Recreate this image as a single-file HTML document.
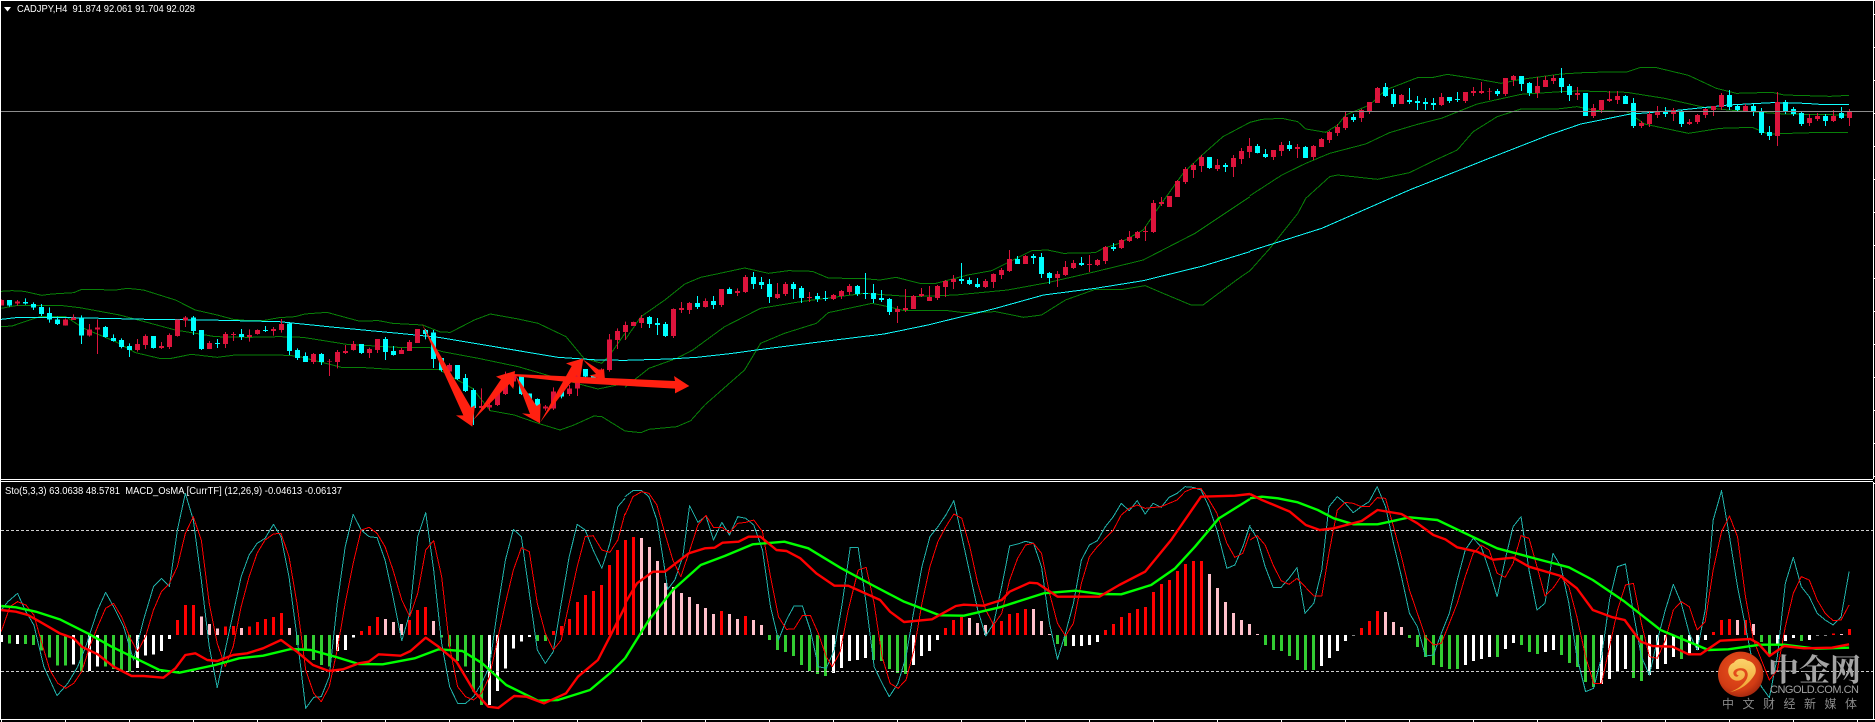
<!DOCTYPE html>
<html lang="zh"><head><meta charset="utf-8"><title>CADJPY,H4</title>
<style>
html,body{margin:0;padding:0;background:#000;width:1875px;height:722px;overflow:hidden}
svg{display:block}
polyline{fill:none;vector-effect:non-scaling-stroke;stroke-linejoin:round}
.bb polyline{stroke:#087f08;stroke-width:1}
.ma polyline{stroke:#1ff;stroke-width:1}
.st polyline{stroke:#20b2aa;stroke-width:1}
.sg polyline{stroke:#f00;stroke-width:1}
.mr polyline{stroke:#f00;stroke-width:2.4;shape-rendering:auto}
.mg polyline{stroke:#0f0;stroke-width:2.4;shape-rendering:auto}
text{font-family:"Liberation Sans","Noto Sans CJK SC",sans-serif;fill:#fff}
</style></head><body>
<svg width="1875" height="722" viewBox="0 0 1875 722" xmlns="http://www.w3.org/2000/svg">
<rect width="1875" height="722" fill="#000"/>

<!-- main chart lines: Bollinger + MA -->
<g shape-rendering="crispEdges">
<g class="bb">
<g transform="scale(.3986,.33333)">
<polyline points="3,874 30,872 60,874 105,886 130,882 185,878 205,868 250,869 290,870 320,865 360,870 400,885 440,900 490,930 545,945 585,958 625,962 660,962 700,953 740,950 765,942 820,937 860,950 900,963 950,962 985,970 1060,975 1105,996 1130,997 1190,960 1230,942 1300,957 1350,970 1420,1010 1465,1075 1510,1090 1530,1065 1568,1000"/>
<polyline points="3,925 40,917 150,916 200,923 300,945 440,990 540,1010 625,1012 700,1010 760,1012 870,1033 1000,1042 1075,1042 1110,1055 1200,1075 1300,1100 1400,1135 1500,1167 1568,1150"/>
<polyline points="3,980 30,978 100,950 165,950 210,985 290,1025 340,1058 400,1075 430,1075 480,1063 545,1072 590,1065 700,1065 745,1068 860,1103 915,1103 980,1108 1100,1108 1185,1165 1230,1232 1290,1245 1350,1270 1405,1290 1440,1275 1490,1248 1510,1250 1568,1293"/>
</g>
<g transform="translate(625,0) scale(.3986,.33333)">
<polyline points="0,1020 40,950 100,900 150,852 190,832 230,822 300,804 360,820 410,812 470,814 510,834 600,836 640,840 680,832 740,850 780,850 860,825 920,812 1020,752 1060,750 1100,760 1180,758 1200,745 1240,730 1300,690 1340,620 1400,520 1445,468 1500,410 1568,367"/>
<polyline points="0,1162 60,1105 130,1075 170,1050 250,980 340,925 440,905 600,880 720,890 830,885 960,870 1060,848 1180,815 1300,780 1430,700 1568,590"/>
<polyline points="0,1293 40,1298 60,1288 130,1280 165,1262 200,1215 300,1110 340,1030 400,1000 480,970 510,938 620,910 660,920 700,932 810,932 850,938 930,935 1000,952 1045,945 1105,900 1180,868 1250,868 1305,857 1350,880 1420,915 1450,915 1540,835 1568,812"/>
</g>
<g transform="translate(1250,0) scale(.3986,.33333)">
<polyline points="0,367 30,358 80,355 120,365 140,387 190,397 220,375 240,345 300,315 340,270 420,233 460,232 495,223 560,235 630,250 680,238 780,222 850,217 945,216 980,202 1020,203 1100,226 1170,265 1220,280 1310,277 1340,285 1455,289 1503,286"/>
<polyline points="0,587 80,525 140,490 200,460 290,432 350,398 420,373 480,355 570,312 680,283 780,275 830,273 945,277 1040,295 1140,322 1200,330 1340,342 1500,345"/>
<polyline points="0,812 50,745 120,640 140,595 200,530 220,525 320,538 400,518 460,483 520,450 560,395 620,350 680,327 770,327 820,320 870,332 945,335 990,372 1040,385 1100,400 1180,385 1260,382 1300,402 1410,398 1500,398"/>
</g>
</g>
<g class="ma">
<g transform="scale(.3986,.33333)"><polyline points="3,958 40,953 180,953 370,958 520,960 700,965 840,982 1000,1000 1100,1012 1200,1032 1300,1052 1400,1072 1500,1080 1568,1081"/></g>
<g transform="translate(625,0) scale(.3986,.33333)"><polyline points="0,1081 110,1077 180,1072 270,1060 330,1050 500,1024 650,1002 760,975 930,925 1050,885 1180,865 1300,842 1450,798 1568,755"/></g>
<g transform="translate(1250,0) scale(.3986,.33333)"><polyline points="0,753 180,685 400,570 600,475 750,405 830,372 950,343 1080,330 1200,315 1310,308 1395,310 1440,314 1503,314"/></g>
</g>

<!-- candles -->
<g transform="scale(1,.33333)" fill="none">
<path stroke="#dc143c" stroke-width="1" d="M1.5 898V916M17.5 900V917M65.5 955V977M73.5 943V960M89.5 972V1010M97.5 958V1062M137.5 1017V1055M145.5 1003V1047M161.5 1026V1047M169.5 1000V1047M177.5 958V1010M185.5 948V981M209.5 1023V1047M225.5 996V1044M233.5 996V1023M249.5 988V1025M257.5 988V1004M273.5 981V1007M281.5 957V998M313.5 1059V1092M329.5 1077V1128M337.5 1050V1105M345.5 1035V1062M353.5 1023V1052M369.5 1043V1074M377.5 1017V1059M401.5 1044V1062M409.5 1020V1053M417.5 987V1029M449.5 1090V1120M481.5 1165V1230M489.5 1205V1232M497.5 1155V1218M505.5 1115V1185M513.5 1125V1160M545.5 1215V1232M553.5 1162V1230M569.5 1155V1188M577.5 1120V1188M601.5 1105V1132M609.5 1002V1115M617.5 985V1047M625.5 965V1020M633.5 965V978M641.5 945V984M673.5 925V1014M681.5 906V939M689.5 906V942M705.5 895V923M721.5 867V921M737.5 865V888M745.5 825V879M777.5 849V897M785.5 846V888M809.5 876V906M833.5 882V900M841.5 870V897M849.5 852V885M897.5 918V969M905.5 867V936M913.5 885V927M921.5 864V891M929.5 858V903M937.5 855V900M945.5 840V891M953.5 825V867M985.5 837V864M993.5 820V864M1001.5 804V837M1009.5 750V816M1025.5 765V792M1057.5 813V861M1065.5 783V828M1073.5 780V807M1089.5 765V816M1097.5 777V798M1105.5 738V792M1121.5 717V747M1129.5 693V726M1137.5 693V717M1145.5 678V723M1153.5 600V699M1161.5 591V618M1169.5 588V621M1177.5 540V591M1185.5 501V552M1193.5 489V534M1201.5 465V516M1217.5 477V513M1233.5 465V531M1241.5 444V492M1249.5 414V474M1273.5 450V480M1281.5 426V468M1297.5 432V474M1313.5 435V480M1321.5 414V441M1329.5 393V429M1337.5 372V408M1345.5 336V390M1361.5 327V366M1369.5 306V342M1377.5 261V309M1401.5 282V312M1441.5 279V318M1465.5 276V309M1473.5 261V288M1481.5 246V282M1489.5 264V300M1505.5 234V288M1513.5 225V258M1537.5 231V294M1545.5 228V261M1553.5 225V252M1577.5 261V300M1593.5 312V354M1601.5 300V339M1609.5 273V306M1617.5 273V312M1641.5 363V384M1649.5 333V381M1657.5 318V354M1673.5 324V363M1689.5 357V375M1697.5 342V372M1705.5 324V354M1713.5 318V348M1721.5 279V330M1745.5 312V333M1777.5 276V438M1809.5 342V378M1817.5 339V363M1833.5 330V366M1849.5 327V378"/>
<path stroke="#dc143c" stroke-width="5" d="M1.5 900V916M17.5 905V911M65.5 958V977M73.5 952V960M89.5 988V1007M97.5 982V989M137.5 1032V1050M145.5 1008V1035M161.5 1038V1044M169.5 1005V1041M177.5 958V1008M185.5 952V962M209.5 1029V1047M225.5 1002V1032M233.5 1002V1005M249.5 1005V1011M257.5 990V1002M273.5 987V993M281.5 972V990M313.5 1062V1086M329.5 1083V1085M337.5 1056V1086M345.5 1053V1059M353.5 1032V1050M369.5 1047V1059M377.5 1017V1050M401.5 1050V1062M409.5 1026V1053M417.5 987V1029M449.5 1095V1115M481.5 1218V1224M489.5 1215V1222M497.5 1175V1215M505.5 1150V1182M513.5 1125V1145M545.5 1220V1225M553.5 1174V1225M569.5 1165V1182M577.5 1120V1165M601.5 1108V1132M609.5 1018V1110M617.5 993V1020M625.5 975V996M633.5 966V978M641.5 954V969M673.5 927V1008M681.5 924V930M689.5 909V930M705.5 903V921M721.5 867V915M737.5 873V879M745.5 831V876M777.5 882V894M785.5 852V882M809.5 891V894M833.5 885V897M841.5 873V888M849.5 858V876M897.5 927V936M905.5 924V930M913.5 888V927M921.5 882V888M929.5 891V903M937.5 858V894M945.5 843V861M953.5 837V846M985.5 843V861M993.5 822V846M1001.5 810V825M1009.5 777V813M1025.5 768V792M1057.5 822V834M1065.5 801V825M1073.5 789V804M1089.5 792V795M1097.5 780V795M1105.5 741V783M1121.5 720V744M1129.5 711V723M1137.5 696V714M1145.5 693V696M1153.5 609V696M1161.5 606V612M1169.5 588V621M1177.5 543V591M1185.5 507V546M1193.5 495V510M1201.5 471V498M1217.5 495V507M1233.5 474V501M1241.5 453V477M1249.5 438V456M1273.5 450V471M1281.5 435V453M1297.5 441V447M1313.5 438V471M1321.5 417V441M1329.5 396V420M1337.5 381V399M1345.5 351V384M1361.5 330V354M1369.5 306V333M1377.5 264V309M1401.5 285V312M1441.5 291V315M1465.5 276V303M1473.5 273V279M1481.5 273V279M1489.5 273V275M1505.5 234V282M1513.5 228V240M1537.5 258V279M1545.5 240V261M1553.5 234V243M1577.5 279V285M1593.5 324V348M1601.5 300V330M1609.5 297V303M1617.5 288V300M1641.5 369V378M1649.5 342V372M1657.5 333V345M1673.5 330V342M1689.5 366V372M1697.5 345V366M1705.5 327V345M1713.5 318V330M1721.5 285V321M1745.5 318V333M1777.5 306V408M1809.5 354V369M1817.5 348V357M1833.5 348V363M1849.5 333V354"/>
<path stroke="#0ff" stroke-width="1" d="M9.5 900V920M25.5 895V914M33.5 907V930M41.5 912V948M49.5 922V968M57.5 950V975M81.5 946V1032M105.5 978V1013M113.5 1003V1025M121.5 1015V1045M129.5 1030V1071M153.5 1008V1046M193.5 948V1005M201.5 990V1050M217.5 1017V1044M241.5 987V1020M265.5 978V996M289.5 967V1065M297.5 1045V1080M305.5 1057V1086M321.5 1059V1095M361.5 1032V1062M385.5 1011V1080M393.5 1038V1067M425.5 987V1018M433.5 990V1104M441.5 1074V1115M457.5 1095V1140M465.5 1122V1176M473.5 1165V1275M521.5 1125V1185M529.5 1180V1205M537.5 1195V1240M561.5 1155V1195M585.5 1107V1132M593.5 1128V1134M649.5 948V984M657.5 954V1005M665.5 966V1011M697.5 888V927M713.5 888V927M729.5 862V882M753.5 816V867M761.5 831V867M769.5 837V909M793.5 846V897M801.5 858V909M817.5 879V906M825.5 873V903M857.5 855V888M865.5 819V897M873.5 852V909M881.5 870V906M889.5 894V945M961.5 789V852M969.5 832V855M977.5 834V864M1017.5 768V792M1033.5 762V792M1041.5 759V834M1049.5 816V852M1081.5 771V798M1113.5 729V753M1209.5 471V507M1225.5 489V516M1257.5 432V460M1265.5 447V474M1289.5 423V453M1305.5 438V474M1353.5 342V366M1385.5 249V291M1393.5 267V321M1409.5 264V312M1417.5 288V330M1425.5 294V330M1433.5 294V330M1449.5 291V309M1457.5 276V306M1497.5 267V288M1521.5 228V273M1529.5 246V288M1561.5 204V279M1569.5 252V303M1585.5 279V348M1625.5 285V312M1633.5 294V384M1665.5 321V351M1681.5 330V381M1729.5 270V330M1737.5 312V333M1753.5 312V348M1761.5 324V405M1769.5 378V420M1785.5 300V342M1793.5 321V348M1801.5 336V378M1825.5 342V378M1841.5 321V357"/>
<path stroke="#0ff" stroke-width="5" d="M9.5 900V917M25.5 906V911M33.5 912V923M41.5 921V942M49.5 939V959M57.5 958V972M81.5 952V1007M105.5 981V1011M113.5 1014V1023M121.5 1020V1041M129.5 1038V1050M153.5 1008V1044M193.5 952V993M201.5 990V1047M217.5 1029V1032M241.5 1002V1011M265.5 990V993M289.5 970V1053M297.5 1050V1074M305.5 1068V1086M321.5 1062V1086M361.5 1032V1059M385.5 1017V1056M393.5 1053V1065M425.5 990V1002M433.5 998V1077M441.5 1074V1110M457.5 1095V1137M465.5 1134V1173M473.5 1170V1224M521.5 1130V1182M529.5 1180V1200M537.5 1197V1225M561.5 1170V1190M585.5 1107V1130M593.5 1128V1132M649.5 951V972M657.5 969V975M665.5 972V1008M697.5 909V921M713.5 903V915M729.5 867V882M753.5 831V852M761.5 846V855M769.5 852V891M793.5 852V867M801.5 864V894M817.5 888V897M825.5 894V897M857.5 858V882M865.5 879V882M873.5 879V897M881.5 894V900M889.5 897V936M961.5 837V843M969.5 840V852M977.5 852V861M1017.5 777V792M1033.5 768V774M1041.5 771V822M1049.5 819V834M1081.5 789V795M1113.5 741V747M1209.5 471V504M1225.5 495V501M1257.5 438V459M1265.5 462V471M1289.5 435V447M1305.5 441V474M1353.5 351V360M1385.5 261V288M1393.5 282V312M1409.5 300V306M1417.5 303V309M1425.5 306V312M1433.5 309V315M1449.5 291V303M1457.5 297V300M1497.5 273V282M1521.5 228V252M1529.5 249V279M1561.5 234V261M1569.5 258V285M1585.5 279V348M1625.5 288V312M1633.5 309V378M1665.5 333V342M1681.5 333V372M1729.5 285V321M1737.5 318V330M1753.5 318V336M1761.5 333V399M1769.5 396V408M1785.5 306V336M1793.5 327V342M1801.5 339V372M1825.5 348V363M1841.5 339V354"/>
</g>
<path d="M0 111.5H1873" stroke="#8c8c8c" stroke-width="1"/>

<!-- frame -->
<path d="M0 .5H1875M.5 0V719M1873.5 0V479M1873.5 482V719M0 479.5H1873M0 481.5H1873M0 719.5H1875" stroke="#fff" stroke-width="1"/>
<path d="M1873 14.5h2M1873 47.5h2M1873 80.5h2M1873 113.5h2M1873 146.5h2M1873 179.5h2M1873 212.5h2M1873 245.5h2M1873 278.5h2M1873 311.5h2M1873 344.5h2M1873 377.5h2M1873 410.5h2M1873 443.5h2M1873 476.5h2M1873 483.5h2" stroke="#fff"/>
<path d="M1.5 719v3M65.5 719v3M129.5 719v3M193.5 719v3M257.5 719v3M321.5 719v3M385.5 719v3M449.5 719v3M513.5 719v3M577.5 719v3M641.5 719v3M705.5 719v3M769.5 719v3M833.5 719v3M897.5 719v3M961.5 719v3M1025.5 719v3M1089.5 719v3M1153.5 719v3M1217.5 719v3M1281.5 719v3M1345.5 719v3M1409.5 719v3M1473.5 719v3M1537.5 719v3M1601.5 719v3M1665.5 719v3M1729.5 719v3M1793.5 719v3M1857.5 719v3" stroke="#fff"/>

<!-- histogram -->
<g transform="translate(0,470) scale(1,.33333)" fill="none" stroke-width="3">
<path stroke="#32cd32" d="M9.5 495V520M25.5 495V522M33.5 495V525M41.5 495V542M49.5 495V563M57.5 495V586M65.5 495V586M81.5 495V605M105.5 495V590M113.5 495V597M121.5 495V605M129.5 495V605M297.5 495V525M305.5 495V540M313.5 495V570M321.5 495V585M329.5 495V590M441.5 495V503M449.5 495V530M457.5 495V573M465.5 495V590M473.5 495V665M481.5 495V705M537.5 495V513M545.5 495V513M769.5 495V510M777.5 495V540M785.5 495V546M793.5 495V558M801.5 495V585M809.5 495V603M817.5 495V612M825.5 495V618M873.5 495V570M881.5 495V573M889.5 495V597M897.5 495V609M905.5 495V612M1057.5 495V522M1065.5 495V528M1265.5 495V525M1273.5 495V540M1281.5 495V543M1289.5 495V558M1297.5 495V570M1305.5 495V600M1313.5 495V600M1409.5 495V504M1417.5 495V531M1425.5 495V561M1433.5 495V585M1441.5 495V591M1449.5 495V597M1457.5 495V597M1497.5 495V561M1521.5 495V525M1529.5 495V546M1537.5 495V552M1561.5 495V555M1569.5 495V579M1577.5 495V591M1585.5 495V636M1593.5 495V651M1633.5 495V624M1641.5 495V633M1681.5 495V567M1761.5 495V516M1769.5 495V555M1801.5 495V513"/>
<path stroke="#fff" d="M1.5 495V516M17.5 495V522M73.5 495V583M89.5 495V603M97.5 495V590M137.5 495V594M145.5 495V557M153.5 495V553M161.5 495V543M169.5 495V507M337.5 495V543M345.5 495V540M353.5 495V503M489.5 495V705M497.5 495V663M505.5 495V595M513.5 495V535M521.5 495V515M529.5 495V501M833.5 495V609M841.5 495V594M849.5 495V573M857.5 495V570M865.5 495V564M913.5 495V585M921.5 495V558M929.5 495V543M937.5 495V510M1073.5 495V528M1081.5 495V528M1089.5 495V525M1097.5 495V516M1321.5 495V588M1329.5 495V564M1337.5 495V543M1345.5 495V513M1353.5 495V497M1465.5 495V585M1473.5 495V573M1481.5 495V567M1489.5 495V561M1505.5 495V537M1513.5 495V519M1545.5 495V546M1553.5 495V540M1601.5 495V642M1609.5 495V627M1617.5 495V606M1625.5 495V597M1649.5 495V615M1657.5 495V597M1665.5 495V582M1673.5 495V561M1689.5 495V555M1697.5 495V540M1705.5 495V510M1777.5 495V522M1785.5 495V513M1793.5 495V504M1809.5 495V510M1817.5 495V497M1825.5 495V497"/>
<path stroke="#f00" d="M177.5 495V450M185.5 495V405M193.5 495V405M225.5 495V470M233.5 495V468M249.5 495V470M257.5 495V456M265.5 495V447M273.5 495V441M281.5 495V429M361.5 495V483M369.5 495V468M377.5 495V441M409.5 495V450M417.5 495V420M425.5 495V411M553.5 495V483M561.5 495V468M569.5 495V447M577.5 495V396M585.5 495V375M593.5 495V363M601.5 495V345M609.5 495V285M617.5 495V240M625.5 495V210M633.5 495V201M721.5 495V423M745.5 495V438M945.5 495V474M953.5 495V450M961.5 495V441M993.5 495V460M1001.5 495V453M1009.5 495V432M1017.5 495V429M1025.5 495V417M1105.5 495V480M1113.5 495V462M1121.5 495V441M1129.5 495V429M1137.5 495V417M1145.5 495V411M1153.5 495V366M1161.5 495V342M1169.5 495V330M1177.5 495V303M1185.5 495V282M1193.5 495V273M1201.5 495V273M1361.5 495V474M1369.5 495V453M1377.5 495V423M1713.5 495V486M1721.5 495V450M1729.5 495V447M1745.5 495V450M1833.5 495V490M1849.5 495V477"/>
<path stroke="#ffc0cb" d="M201.5 495V440M209.5 495V462M217.5 495V475M241.5 495V474M289.5 495V474M385.5 495V447M393.5 495V456M401.5 495V462M433.5 495V453M641.5 495V204M649.5 495V231M657.5 495V273M665.5 495V339M673.5 495V351M681.5 495V369M689.5 495V381M697.5 495V402M705.5 495V414M713.5 495V432M729.5 495V432M737.5 495V447M753.5 495V450M761.5 495V465M969.5 495V444M977.5 495V459M985.5 495V465M1033.5 495V417M1041.5 495V453M1049.5 495V492M1209.5 495V312M1217.5 495V354M1225.5 495V396M1233.5 495V429M1241.5 495V450M1249.5 495V462M1257.5 495V492M1385.5 495V426M1393.5 495V456M1401.5 495V471M1737.5 495V450M1753.5 495V462M1841.5 495V492"/>
</g>

<path d="M1 530.5H1873M1 671.5H1873" stroke="#cfcfcf" stroke-width="1" stroke-dasharray="3 2"/>

<!-- stochastic -->
<g class="st">
<g transform="translate(0,470) scale(.3986,.33333)"><polyline points="3,420 20,395 44,370 65,425 85,465 110,590 143,677 170,640 195,590 215,530 245,420 265,367 285,410 310,470 335,570 360,450 385,350 405,325 425,350 445,180 465,70 485,150 505,330 525,530 545,653 565,540 585,430 605,320 625,255 645,220 665,205 686,163 705,200 725,320 745,500 767,715 787,682 806,680 826,620 846,400 866,230 886,133 906,180 926,200 946,203 966,270 986,380 1008,512 1028,430 1048,200 1068,128 1088,300 1108,520 1128,650 1148,700 1168,700 1188,680 1208,640 1228,590 1248,420 1268,270 1288,178 1308,200 1328,370 1348,540 1368,580 1388,545 1408,400 1428,260 1448,163 1468,180 1488,240 1510,295 1530,220 1550,110 1568,85"/></g>
<g transform="translate(625,470) scale(.3986,.33333)"><polyline points="0,80 20,62 42,62 60,80 80,150 100,300 107,358 125,330 145,260 162,107 183,157 203,138 222,210 243,157 262,195 283,140 303,145 323,165 345,240 365,410 385,510 405,450 424,408 445,408 465,480 485,590 505,595 525,540 545,400 565,232 585,232 605,400 625,590 645,640 663,680 685,640 705,560 725,420 745,290 765,200 785,170 805,135 825,92 845,200 865,310 885,420 905,498 925,460 945,350 965,228 985,222 1005,214 1025,220 1045,290 1065,460 1085,568 1105,490 1125,400 1145,270 1165,225 1185,212 1205,170 1225,140 1245,100 1265,122 1285,92 1305,132 1325,100 1345,112 1365,82 1385,70 1405,50 1425,52 1445,60 1465,110 1485,180 1510,295 1530,285 1550,230 1568,165"/></g>
<g transform="translate(1250,470) scale(.3986,.33333)"><polyline points="0,170 18,205 38,290 58,352 78,352 98,325 118,293 138,430 160,400 180,300 198,110 219,80 239,100 259,128 279,110 299,95 319,50 340,110 360,220 380,320 400,430 420,470 440,558 460,555 480,490 500,430 520,330 540,240 560,205 580,230 600,300 620,380 640,270 660,170 680,140 700,300 720,420 740,400 760,250 780,290 800,400 820,560 842,665 862,655 882,560 902,390 922,290 942,282 962,430 982,560 1002,615 1022,510 1042,420 1062,343 1082,400 1102,490 1122,540 1142,420 1162,150 1183,62 1203,200 1223,350 1243,470 1263,590 1283,650 1303,683 1323,560 1343,340 1363,262 1383,350 1403,380 1423,430 1443,450 1463,465 1483,440 1503,305"/></g>
</g>
<g class="sg">
<g transform="translate(0,470) scale(.3986,.33333)"><polyline points="3,485 25,410 44,395 65,405 85,435 105,520 125,600 145,640 165,655 185,640 205,605 225,530 245,470 265,415 285,400 305,440 325,500 345,545 365,500 385,420 405,365 425,340 445,290 465,190 485,140 505,210 525,400 545,520 565,590 585,530 605,410 625,320 645,250 665,210 686,192 705,190 725,260 745,400 767,600 787,670 806,695 826,650 846,540 866,400 886,280 906,180 926,172 946,190 966,230 986,300 1008,390 1028,440 1048,370 1068,240 1088,212 1108,320 1128,530 1148,650 1168,680 1188,690 1208,670 1228,620 1248,510 1268,400 1288,300 1308,233 1328,245 1348,400 1368,490 1388,540 1408,510 1428,400 1448,290 1468,200 1488,197 1510,240 1530,247 1550,210 1568,130"/></g>
<g transform="translate(625,470) scale(.3986,.33333)"><polyline points="0,135 20,80 42,65 60,70 80,105 100,190 120,270 140,320 160,250 183,165 203,136 222,172 243,172 262,188 283,160 303,157 323,150 345,185 365,320 385,440 405,478 424,477 445,437 465,436 485,490 505,560 520,590 540,545 560,420 585,300 605,292 625,400 645,560 665,640 685,655 705,630 725,540 745,400 765,290 785,215 805,170 825,132 845,145 865,230 885,340 905,420 925,465 945,430 965,330 985,265 1005,225 1025,220 1045,250 1065,370 1085,460 1105,498 1125,460 1145,340 1165,260 1185,230 1225,180 1245,135 1265,115 1285,105 1305,115 1345,110 1385,90 1405,65 1425,55 1445,55 1465,90 1485,130 1510,220 1530,262 1550,250 1568,190"/></g>
<g transform="translate(1250,470) scale(.3986,.33333)"><polyline points="0,210 18,197 38,225 58,285 78,332 98,343 118,325 138,350 160,378 180,378 198,250 219,120 239,97 259,100 279,110 299,110 319,83 340,85 360,170 380,260 400,360 420,430 440,500 460,525 480,520 500,460 520,400 540,320 560,250 580,225 600,240 620,310 640,322 660,280 680,197 700,205 720,290 740,378 760,355 780,320 800,350 820,440 842,560 862,640 882,640 902,530 922,420 942,345 962,340 982,460 1002,560 1022,565 1042,510 1062,420 1082,395 1102,410 1122,480 1142,455 1162,300 1183,185 1203,138 1223,200 1243,380 1263,510 1283,570 1303,630 1323,600 1343,470 1363,370 1383,320 1403,330 1423,390 1443,430 1463,452 1483,450 1503,405"/></g>
</g>

<!-- MACD -->
<g class="mg">
<g transform="translate(0,470) scale(.3986,.33333)"><polyline points="3,408 40,412 90,425 150,448 220,490 280,530 340,565 400,600 450,608 540,585 600,565 660,557 730,537 780,540 840,560 900,582 960,583 1040,565 1100,538 1160,543 1210,580 1270,645 1350,692 1400,690 1480,660 1530,610 1568,565"/></g>
<g transform="translate(625,470) scale(.3986,.33333)"><polyline points="0,565 60,450 120,360 190,285 250,258 320,223 400,215 460,235 540,293 620,345 700,395 790,436 850,437 940,412 1050,370 1130,362 1190,372 1245,373 1320,345 1380,295 1430,230 1490,145 1568,87"/></g>
<g transform="translate(1250,470) scale(.3986,.33333)"><polyline points="0,85 30,80 70,85 120,97 170,120 210,145 260,163 320,163 400,142 470,150 540,190 620,235 720,267 800,292 860,330 940,395 1030,480 1090,510 1150,540 1200,538 1280,524 1340,524 1420,536 1503,533"/></g>
</g>
<g class="mr">
<g transform="translate(0,470) scale(.3986,.33333)"><polyline points="3,420 40,425 70,435 100,455 150,490 185,505 205,530 245,553 285,590 330,618 360,618 410,623 440,595 465,555 490,550 520,570 545,573 585,555 620,550 660,535 705,510 745,545 785,585 825,603 860,598 900,580 925,575 950,553 1005,557 1030,543 1068,503 1100,530 1145,575 1190,665 1225,710 1250,714 1290,678 1320,680 1365,700 1420,670 1450,620 1500,570 1530,500 1568,410"/></g>
<g transform="translate(625,470) scale(.3986,.33333)"><polyline points="0,400 30,340 70,305 100,305 160,250 200,235 225,233 245,218 285,215 310,200 340,200 380,240 405,243 440,265 480,310 525,347 560,347 640,390 665,425 700,456 770,448 830,408 850,404 900,407 945,390 965,365 1015,338 1035,340 1085,380 1190,380 1240,345 1305,305 1370,210 1445,80 1530,77 1568,72"/></g>
<g transform="translate(1250,470) scale(.3986,.33333)"><polyline points="0,72 30,90 70,110 100,125 140,165 175,180 210,175 280,153 320,120 380,132 420,160 460,195 490,208 520,232 570,245 610,269 660,263 700,290 780,318 820,355 860,420 910,442 940,450 980,515 1010,528 1060,530 1100,553 1130,553 1180,512 1255,507 1275,520 1303,558 1340,528 1390,535 1460,533 1503,523"/></g>
</g>
</g>

<!-- hand-drawn arrows -->
<g transform="translate(420,320) scale(.33333)" fill="#ff2010">
<polygon points="280,162 765,183 762,168 808,198 765,220 765,206 470,189 280,168"/>
<polygon points="5,10 130,286 108,286 157,320 165,256 153,263"/>
<polygon points="160,300 243,178 228,170 285,153 280,207 268,192"/>
<polygon points="285,163 330,282 306,280 360,310 362,250 350,258"/>
<polygon points="360,308 455,138 438,130 490,115 480,180 470,165"/>
<polygon points="488,118 528,162 508,166 555,180 552,146 541,152"/>
</g>

<!-- labels -->
<polygon points="4,7 11,7 7.5,11.5" fill="#fff"/>
<text x="17" y="12" font-size="10" textLength="178" lengthAdjust="spacingAndGlyphs">CADJPY,H4&#160;&#160;91.874 92.061 91.704 92.028</text>
<text x="5" y="494" font-size="10" textLength="337" lengthAdjust="spacingAndGlyphs">Sto(5,3,3) 63.0638 48.5781&#160;&#160;MACD_OsMA [CurrTF] (12,26,9) -0.04613 -0.06137</text>

<!-- watermark -->
<defs>
<radialGradient id="lg" cx="45%" cy="40%" r="60%"><stop offset="0" stop-color="#e8501e"/><stop offset=".75" stop-color="#d23c14"/><stop offset="1" stop-color="#a82a10"/></radialGradient>
<linearGradient id="ly" x1="0" y1="0" x2="0" y2="1"><stop offset="0" stop-color="#fbd36a"/><stop offset="1" stop-color="#f0a030"/></linearGradient>
</defs>
<g transform="translate(1700,640) scale(.33333)">
<ellipse cx="122" cy="103" rx="68" ry="68" fill="url(#lg)"/>
<path d="M90 156C122 150 150 130 166 100C172 84 160 64 142 62C128 52 108 56 102 68C88 72 80 90 88 106C96 124 120 128 132 112C140 100 130 88 116 92C106 96 108 106 116 106C112 114 100 110 100 98C102 86 122 80 136 88C146 96 146 112 134 126C122 142 106 150 90 156Z" fill="url(#ly)"/>
</g>
<text x="1768" y="681" font-size="31" font-weight="700" style="font-family:'Noto Serif CJK SC','Noto Sans CJK SC',serif;fill:#a4a4a4">中金网</text>
<text x="1770" y="693" font-size="11" textLength="89" style="fill:#a0a0a0">CNGOLD.COM.CN</text>
<text x="1722" y="708" font-size="12" letter-spacing="8.5" style="font-family:'Noto Sans CJK SC',sans-serif;fill:#8a8a8a">中文财经新媒体</text>
</svg>
</body></html>
